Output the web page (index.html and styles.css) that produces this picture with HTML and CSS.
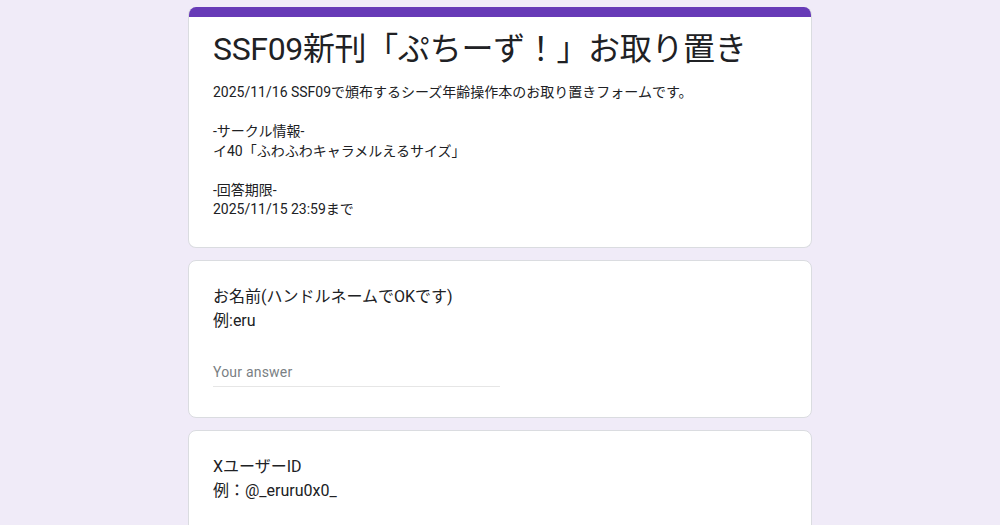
FILE: index.html
```html
<!DOCTYPE html>
<html lang="ja">
<head>
<meta charset="utf-8">
<title>SSF09新刊「ぷちーず！」お取り置き</title>
<link rel="stylesheet" href="styles.css">
</head>
<body>
<main class="form">
  <section class="card header-card">
    <div class="accent"></div>
    <div class="header-body">
      <h1 class="title">SSF09新刊「ぷちーず！」お取り置き</h1>
      <div class="desc">2025/11/16 SSF09で頒布するシーズ年齢操作本のお取り置きフォームです。

-サークル情報-
イ40「ふわふわキャラメルえるサイズ」

-回答期限-
2025/11/15 23:59まで</div>
    </div>
  </section>

  <section class="card question">
    <div class="q-title">お名前(ハンドルネームでOKです)<br>例:eru</div>
    <div class="answer"><span class="placeholder">Your answer</span></div>
  </section>

  <section class="card question">
    <div class="q-title">XユーザーID<br>例：@_eruru0x0_</div>
    <div class="answer"><span class="placeholder">Your answer</span></div>
  </section>
</main>
</body>
</html>
```

FILE: styles.css
```css
html, body {
  margin: 0;
  padding: 0;
  background: #f0ebf8;
}
body {
  font-family: Roboto, "Noto Sans CJK JP", sans-serif;
  color: #202124;
}
.form {
  width: 624px;
  margin: 0 auto;
  padding-top: 7px;
  display: flex;
  flex-direction: column;
  gap: 12px;
}
.card {
  background: #fff;
  border: 1px solid #dadce0;
  border-radius: 8px;
  box-sizing: border-box;
  overflow: hidden;
}
.header-card {
  border-top: none;
}
.accent {
  height: 10px;
  background: #673ab7;
}
.header-body {
  padding: 12px 24px 27px;
}
.title {
  margin: 0;
  font-size: 32px;
  line-height: 40px;
  font-weight: 400;
  letter-spacing: -0.35px;
}
.desc {
  margin-top: 14px;
  font-size: 14px;
  line-height: 19.5px;
  white-space: pre-line;
}
.question {
  padding: 24px 24px 30px;
}
.q-title {
  font-size: 16px;
  line-height: 24px;
}
.answer {
  margin-top: 29px;
  width: 50%;
  padding-bottom: 4px;
  border-bottom: 1px solid #e6e6e6;
  font-size: 14px;
  line-height: 20px;
}
.placeholder {
  color: #7a7f84;
  letter-spacing: 0.2px;
}
```
